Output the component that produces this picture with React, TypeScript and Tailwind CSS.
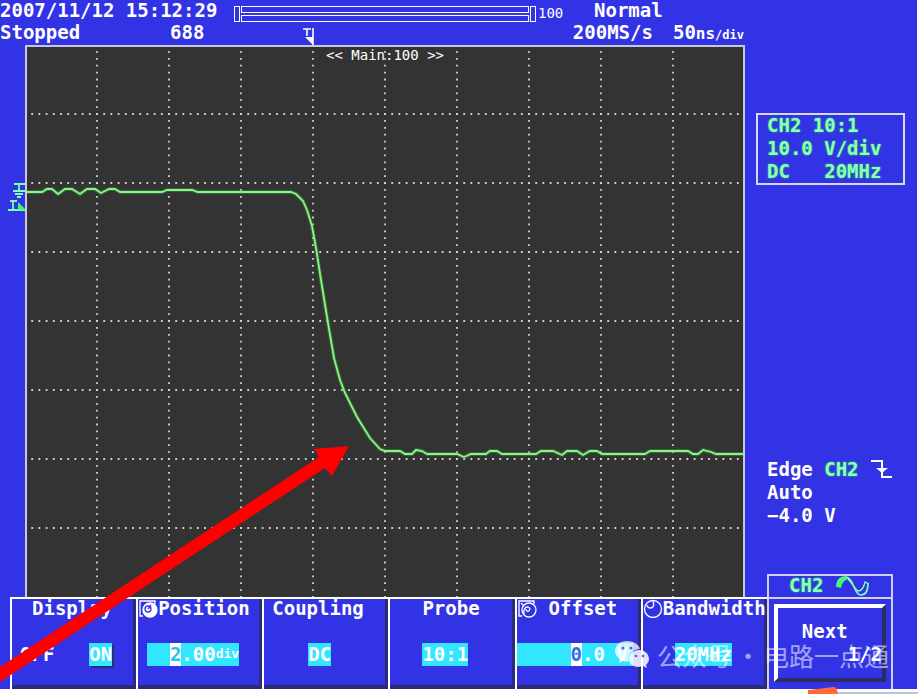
import type { ReactNode } from 'react';
import clsx from 'clsx';

const TRACE =
  '0,147 17,147 22,144 27,144 33,149 40,144 47,144 55,149 62,144 70,144 76,148 84,144 90,144 95,147 137,147 142,145 167,145 173,147 ' +
  '266,147 271,149 278,156 282,165 287,181 291,203 296,235 303,278 309,313 315,335 320,348 332,372 345,393 355,404 360,406 ' +
  '375,406 380,409 387,409 391,405 397,406 402,409 432,409 439,412 446,409 461,409 465,406 472,406 477,409 511,409 516,406 ' +
  '528,406 537,410 542,406 552,406 558,410 565,406 572,406 577,409 620,409 625,406 663,406 668,409 673,409 678,405 686,407 ' +
  '691,409 720,409';

const COLUMNS = [72, 144, 216, 288, 360, 432, 504, 576, 648];
const ROWS = [69, 138, 207, 276, 345, 414, 483];

function Plot() {
  return (
    <svg
      viewBox="0 0 720 552"
      preserveAspectRatio="none"
      role="img"
      aria-label="Channel 2 waveform"
      className="block w-full aspect-[720/552] bg-[#333333]"
    >
      <g stroke="#d4d4d4" strokeWidth="1.8">
        {COLUMNS.map((x) => (
          <line key={x} x1={x} x2={x} y1="6" y2="552" strokeDasharray="1.8 5.1" />
        ))}
        {ROWS.map((y) => (
          <line key={y} x1="6.3" x2="720" y1={y} y2={y} strokeDasharray="1.8 5.4" />
        ))}
      </g>
      <polyline points={TRACE} fill="none" stroke="#33b833" strokeOpacity="0.4" strokeWidth="4" />
      <polyline points={TRACE} fill="none" stroke="#8ef08e" strokeWidth="1.8" />
      <path d="M0 1H719V552M1 0V552" fill="none" stroke="#c8c8dc" strokeWidth="2" />
    </svg>
  );
}

function LevelMarkers() {
  return (
    <svg viewBox="0 0 25 552" preserveAspectRatio="none" className="block h-full w-full" aria-hidden="true">
      <g fill="none" stroke="#7dffb4" strokeWidth="1.8">
        <path d="M14 139H25M19 139V146M13 146H25M15 149H23M17 152H21" />
        <path d="M8 165H25M10 156H17M13 156V165" />
      </g>
      <path d="M18 157L26 165H18Z" fill="#3dff5c" />
    </svg>
  );
}

function RecordBar() {
  return (
    <div className="flex h-4 items-stretch gap-px">
      <span className="w-[6px] border border-white" />
      <span className="flex flex-1 flex-col justify-between">
        <span className="h-[7px] border border-white" />
        <span className="h-[7px] border border-white" />
      </span>
      <span className="w-[6px] border border-white" />
    </div>
  );
}

function Knob({ kind }: { kind: 'solid' | 'boxed' | 'round' }) {
  return (
    <svg viewBox="0 0 20 20" className="h-5 w-5 shrink-0" fill="none" stroke="white" strokeWidth="1.3" aria-hidden="true">
      {kind !== 'round' && <path d="M5 3H2V18H5M2 3H17V6" />}
      {kind === 'solid' && (
        <>
          <circle cx="12" cy="12" r="7" fill="white" />
          <circle cx="10" cy="11" r="3" stroke="#3333e6" />
          <path d="M10 11L13 7" stroke="#3333e6" />
        </>
      )}
      {kind === 'boxed' && (
        <>
          <circle cx="12" cy="12" r="7" />
          <path d="M7 16Q6 9 11 9Q14 10 12 13Q9 14 9 11M4 5L7 8" />
        </>
      )}
      {kind === 'round' && (
        <>
          <circle cx="10" cy="11" r="8.500" />
          <path d="M10 3Q12 9 8 10Q4 10 4 7" />
        </>
      )}
    </svg>
  );
}

function SoftKey({ title, icon, indent, children }: { title: string; icon?: ReactNode; indent: string; children: ReactNode }) {
  return (
    <button
      type="button"
      className="flex h-[92px] min-w-0 flex-col items-stretch gap-[26px] border-l-2 border-t-2 border-white text-left shadow-[inset_-3px_-4px_1px_#2c2c70]"
    >
      <span className={clsx('flex h-[18px] items-center whitespace-nowrap leading-[18px]', indent)}>
        {icon}
        {title}
      </span>
      {children}
    </button>
  );
}

const VALUE = 'h-[23px] whitespace-pre bg-[#33e6ff] leading-[22px]';

function MenuBar() {
  return (
    <nav aria-label="Channel menu" className="grid grid-cols-7 pl-[10px] pr-6">
      <SoftKey title="Display" indent="pl-5">
        <span className="flex justify-between pl-2 pr-6 leading-[22px]">
          <span>OFF</span>
          <span className={clsx(VALUE, 'shadow-[2px_2px_0_#2c2c70]')}>ON</span>
        </span>
      </SoftKey>
      <SoftKey title="Position" icon={<Knob kind="solid" />} indent="">
        <span className={clsx(VALUE, 'ml-[9px] flex w-[92px] justify-end')}>
          <span className="bg-white text-[#33c0f0]">2</span>.00<span className="text-[13px]">div</span>
        </span>
      </SoftKey>
      <SoftKey title="Coupling" indent="pl-2">
        <span className={clsx(VALUE, 'ml-11 self-start')}>DC</span>
      </SoftKey>
      <SoftKey title="Probe" indent="pl-8">
        <span className={clsx(VALUE, 'ml-8 self-start')}>10:1</span>
      </SoftKey>
      <SoftKey title="Offset" icon={<Knob kind="boxed" />} indent="gap-3">
        <span className={clsx(VALUE, 'mr-2 flex pl-[54px]')}>
          <span className="bg-white text-[#3370e6]">0</span>.0 V
        </span>
      </SoftKey>
      <SoftKey title="Bandwidth" icon={<Knob kind="round" />} indent="">
        <span className={clsx(VALUE, 'ml-8 self-start')}>20MHz</span>
      </SoftKey>
      <div className="h-[92px] min-w-0 border-x-2 border-t-2 border-[#d0d0f4] p-[5px]">
        <button
          type="button"
          className="flex h-[78px] w-full flex-col justify-center border-4 border-b-[#2c2c60] border-l-white border-r-[#2c2c60] border-t-white leading-[23px]"
        >
          <span className="self-start pl-6">Next</span>
          <span className="self-end">1/2</span>
        </button>
      </div>
    </nav>
  );
}

function Watermark() {
  return (
    <div className="pointer-events-none absolute bottom-[18px] right-7 flex items-center gap-2 text-[25px] font-normal leading-8 text-white/55 [font-family:'Noto_Sans_CJK_SC',sans-serif]">
      <svg viewBox="0 0 34 28" className="h-7 w-[34px]" aria-hidden="true">
        <path
          d="M12 0C5 0 0 4 0 10c0 4 2 6 5 8l-1 4 4-2q3 1 6 0c-2-7 4-12 11-12C24 3 18 0 12 0Z"
          fill="white"
          fillOpacity="0.75"
        />
        <path d="M24 9c-6 0-10 4-10 9s4 8 10 8l4-1 4 2-1-3c2-2 3-4 3-6 0-5-4-9-10-9Z" fill="white" fillOpacity="0.85" />
        <g fill="#5b5be0">
          <circle cx="8" cy="7" r="1.500" />
          <circle cx="16" cy="7" r="1.500" />
          <circle cx="21" cy="15" r="1.300" />
          <circle cx="28" cy="15" r="1.300" />
        </g>
      </svg>
      <span className="flex whitespace-nowrap">
        <span>公众号</span>
        <span className="w-8 text-center">·</span>
        <span>电路一点通</span>
      </span>
    </div>
  );
}

const GREEN = 'text-[#8affb8] [text-shadow:0_0_2px_#22e040]';

export default function App() {
  return (
    <div className="relative min-h-screen overflow-hidden bg-white pr-px text-[19px] font-bold text-white [font-family:'DejaVu_Sans_Mono','Liberation_Mono',monospace]">
      <main className="relative bg-[#3333e6]">
        <header className="whitespace-nowrap">
          <div className="flex h-[22px] leading-5">
            <time className="w-[234px]">2007/11/12 15:12:29</time>
            <div className="flex-1 pt-[6px]">
              <RecordBar />
            </div>
            <span className="w-[58px] pl-0.5 pt-[3px] text-[14px] font-normal">100</span>
            <span className="w-[323px]">Normal</span>
          </div>
          <div className="flex h-[23px] pr-[173px] leading-5">
            <span className="w-[170px]">Stopped</span>
            <span className="w-[133px]">688</span>
            <svg viewBox="0 0 11 18" className="h-[18px] w-[11px] self-end" aria-hidden="true">
              <path d="M0 2H8M4 2V9M10 1V18" fill="none" stroke="white" strokeWidth="1.6" />
              <path d="M2 10H10V18Z" fill="white" />
            </svg>
            <span className="ml-auto mr-5">200MS/s</span>
            <span>
              50<span className="text-[16px]">ns</span>
              <span className="text-[12px]">/div</span>
            </span>
          </div>
        </header>

        <div className="flex">
          <div className="w-[25px] shrink-0">
            <LevelMarkers />
          </div>
          <div className="relative min-w-0 flex-1">
            <Plot />
            <p className="absolute inset-x-0 top-0 text-center text-[14px] font-normal leading-5">&lt;&lt; Main:100 &gt;&gt;</p>
          </div>
          <aside className="flex w-[172px] shrink-0 flex-col leading-[23px]">
            <section
              className={clsx(
                'ml-[11px] mr-3 mt-[68px] flex h-[72px] flex-col gap-[3px] whitespace-pre border-2 border-[#d8d8f0] pl-[9px] leading-5',
                GREEN,
              )}
            >
              <p>CH2 10:1</p>
              <p>10.0 V/div</p>
              <p>DC   20MHz</p>
            </section>
            <section className="mb-[47px] ml-[22px] mt-auto">
              <p className="flex">
                Edge&nbsp;<span className={GREEN}>CH2</span>
                <svg viewBox="0 0 22 20" className="ml-3 mt-px h-5 w-[22px]" aria-hidden="true">
                  <path d="M0 2H11V18H21" fill="none" stroke="white" strokeWidth="2" />
                  <path d="M5 9H17L11 14Z" fill="white" />
                </svg>
              </p>
              <p>Auto</p>
              <p>−4.0 V</p>
            </section>
            <div className={clsx('ml-[22px] mr-6 flex h-[23px] border-2 border-b-0 border-[#d0d0f4] pl-5 leading-[18px]', GREEN)}>
              CH2
              <svg viewBox="0 0 36 22" className="ml-3 h-[22px] w-9 shrink-0" fill="none" aria-hidden="true">
                <path d="M2 11C2 4 6 1 10 1C15 1 17 6 19 11C21 16 23 19 26 19C31 19 33 14 33 7" stroke="#8affb8" strokeWidth="1.6" />
                <path d="M2 11C2 4 6 1 10 1L14 3C8 4 7 8 6 12Z" fill="#3dff5c" />
                <path d="M13 3C18 8 20 13 23 15C27 15 29 11 30 6L34 8" stroke="#8affb8" strokeWidth="1.3" />
              </svg>
            </div>
          </aside>
        </div>

        <MenuBar />
        <Watermark />
        <svg viewBox="0 0 350 240" className="pointer-events-none absolute bottom-1 left-0 h-60 w-[350px]" aria-hidden="true">
          <path d="M0 222L319 12L314 4L349 1L332 31L325 23L0 237Z" fill="#ff0000" />
        </svg>
      </main>

      <svg viewBox="0 0 110 8" className="absolute bottom-0 right-0 h-2 w-[110px]" aria-hidden="true">
        <path d="M30 7H110" stroke="#b9c5e0" strokeWidth="2" />
        <path d="M0 4L26 1Q29 1 30 8H0Z" fill="#ff6b35" />
      </svg>
    </div>
  );
}
